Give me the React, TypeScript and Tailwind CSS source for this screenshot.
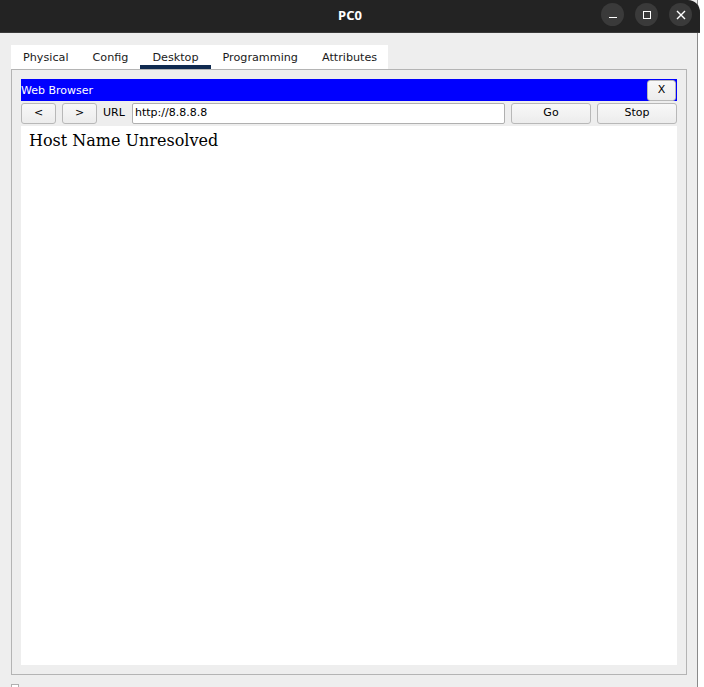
import React from "react";

const ui = { fontFamily: '"DejaVu Sans", "Noto Sans", sans-serif' };

function Btn({ children, className }: { children: React.ReactNode; className: string }) {
  return (
    <div
      className={`flex items-center justify-center rounded-[3px] border border-[#b8b8b8] bg-gradient-to-b from-[#f8f8f8] to-[#ececec] text-[11px] text-black ${className}`}
    >
      {children}
    </div>
  );
}

export default function App() {
  const tabs = ["Physical", "Config", "Desktop", "Programming", "Attributes"];
  return (
    <div className="w-[704px] h-[687px] overflow-hidden bg-white flex" style={ui}>
      <div className="w-[698px] h-full flex flex-col bg-[#eeeeee] border-r border-[#8a8a8a]">
        {/* title bar */}
        <div className="h-[33px] w-[700px] shrink-0 bg-[#232323] rounded-tr-[12px] relative flex items-center justify-center border-b border-[#3a3a3a]">
          <span className="text-white font-bold text-[13px]" style={{ fontFamily: '"Noto Sans", "DejaVu Sans", sans-serif' }}>
            PC0
          </span>
          <div className="absolute right-[8px] top-[3px] flex gap-[11px]">
            <div className="w-[23px] h-[23px] rounded-full bg-[#3a3a3a] flex items-center justify-center">
              <div className="w-[8px] h-[1.5px] bg-white mt-[6px]" />
            </div>
            <div className="w-[23px] h-[23px] rounded-full bg-[#3a3a3a] flex items-center justify-center">
              <div className="w-[8px] h-[8px] border-[1.5px] border-white" />
            </div>
            <div className="w-[23px] h-[23px] rounded-full bg-[#3a3a3a] flex items-center justify-center">
              <svg width="10" height="10" viewBox="0 0 10 10">
                <path d="M1 1 L9 9 M9 1 L1 9" stroke="white" strokeWidth="1.4" />
              </svg>
            </div>
          </div>
        </div>

        <div className="flex flex-col pl-[11px] pr-[11px] pt-[12px] flex-1">
          {/* tabs */}
          <div className="flex w-[377px] h-[24px] bg-white text-[11.2px] text-[#1a1a1a]">
            {tabs.map((t) => (
              <div key={t} className="relative h-full flex items-center px-[12px] pt-[2px]">
                <span>{t}</span>
                {t === "Desktop" && (
                  <div className="absolute left-0 right-0 bottom-0 h-[4px] bg-[#0f2a50]" />
                )}
              </div>
            ))}
          </div>

          {/* panel */}
          <div className="w-[676px] h-[606px] border border-[#b4b4b4] p-[9px] flex flex-col">
            {/* Web browser bar */}
            <div className="h-[22px] bg-[#0000ff] flex items-center justify-between">
              <span className="text-white text-[11px] leading-none">Web Browser</span>
              <Btn className="w-[29px] h-[21px] mr-[1px] rounded-[2px]">X</Btn>
            </div>
            {/* url row */}
            <div className="flex items-center h-[22px] mt-[1px] gap-[6px]">
              <Btn className="w-[35px] h-[21px]">&lt;</Btn>
              <Btn className="w-[35px] h-[21px]">&gt;</Btn>
              <span className="text-[11px] text-black w-[23px]">URL</span>
              <div className="w-[373px] h-[21px] bg-white border border-[#b0b0b0] rounded-[2px] flex items-center pl-[2px] text-[11px] text-black">
                http://8.8.8.8
              </div>
              <Btn className="w-[80px] h-[21px]">Go</Btn>
              <Btn className="w-[80px] h-[21px]">Stop</Btn>
            </div>
            {/* page */}
            <div className="flex-1 bg-white mt-[2px] px-[8px] pt-[5px]">
              <div
                className="text-[16px] text-black leading-[20px]"
                style={{ fontFamily: '"DejaVu Serif", "Liberation Serif", serif' }}
              >
                Host Name Unresolved
              </div>
            </div>
          </div>
          <div className="mt-[9px] w-[8px] h-[8px] border border-[#b0b0b0] bg-white" />
        </div>
      </div>
    </div>
  );
}
